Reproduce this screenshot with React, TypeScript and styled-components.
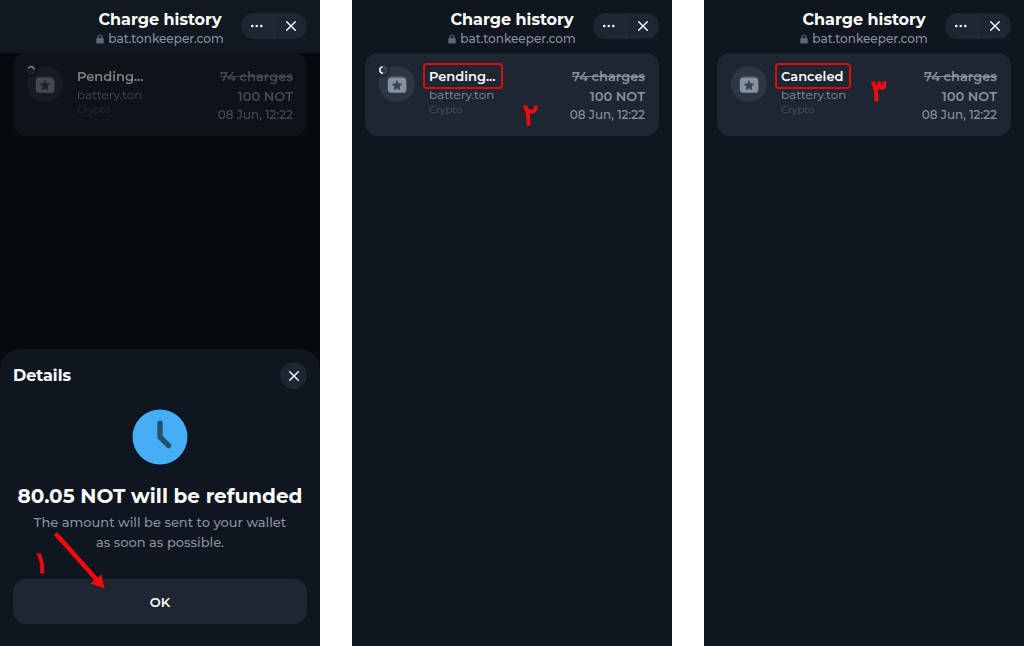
import React from "react";
import styled, { createGlobalStyle, css } from "styled-components";

const color = {
  page: "#10161f",
  header: "#111822",
  surface: "#1d2631",
  circle: "#2d3744",
  text: "#ffffff",
  soft: "#87919f",
  faint: "#4f5966",
  mark: "#f00a0c",
  accent: "#45aef5",
};

const GlobalStyle = createGlobalStyle`
  *, *::before, *::after { box-sizing: border-box; }
  body {
    margin: 0;
    background: #ffffff;
    color: ${color.text};
    font-family: Montserrat, Inter, "Noto Sans", sans-serif;
  }
  h1, h2, h3, p, ul { margin: 0; padding: 0; }
  button { font: inherit; color: inherit; border: 0; padding: 0; cursor: pointer; }
`;

const Gallery = styled.main`
  display: grid;
  grid-template-columns: repeat(3, minmax(0, 1fr));
  gap: 32px;
  min-height: 100vh;
`;

const Screen = styled.section`
  position: relative;
  display: flex;
  flex-direction: column;
  background: ${color.page};
`;

const Header = styled.header<{ $raised?: boolean }>`
  display: grid;
  grid-template-columns: 1fr auto 1fr;
  padding: 9px 13px 5px;
  min-height: 53px;
  background: ${(p) => (p.$raised ? color.header : color.page)};
`;

const Heading = styled.div`
  grid-column: 2;
  text-align: center;
`;

const Title = styled.h1`
  font-size: 16px;
  font-weight: 700;
  line-height: 22px;
  white-space: nowrap;
`;

const Site = styled.p`
  display: flex;
  align-items: center;
  justify-content: center;
  gap: 4px;
  color: ${color.soft};
  font-size: 12px;
  font-weight: 500;
  line-height: 16px;
`;

const Controls = styled.div`
  justify-self: end;
  display: flex;
  align-items: center;
  width: 66px;
  height: 26px;
  margin-top: 4px;
  border-radius: 13px;
  background: ${color.surface};
`;

const ControlButton = styled.button`
  display: grid;
  place-items: center;
  flex: 1;
  height: 100%;
  background: none;

  & + & {
    border-left: 1px solid #222c38;
  }
`;

const Body = styled.div<{ $dimmed?: boolean }>`
  flex: 1;
  display: flex;
  flex-direction: column;
  background: ${(p) => (p.$dimmed ? "#06090d" : color.page)};
`;

const Card = styled.article<{ $dimmed?: boolean }>`
  display: flex;
  gap: 14px;
  min-height: 83px;
  margin: 0 13px;
  padding: 13px 14px 11px;
  border-radius: 13px;
  background: ${color.surface};
  ${(p) => p.$dimmed && css`filter: brightness(0.5);`}
`;

const Avatar = styled.div`
  position: relative;
  display: grid;
  place-items: center;
  width: 36px;
  height: 36px;
  border-radius: 50%;
  background: ${color.circle};
`;

const Spinner = styled.span`
  position: absolute;
  top: -3px;
  left: -3px;
  display: grid;
  place-items: center;
  width: 14px;
  height: 14px;
  border: 2px solid ${color.surface};
  border-radius: 50%;
  background: ${color.circle};
`;

const Info = styled.div`
  flex: 1;
  min-width: 0;
`;

const Status = styled.h2<{ $marked?: boolean }>`
  position: relative;
  width: fit-content;
  font-size: 13px;
  font-weight: 600;
  line-height: 20px;

  ${(p) =>
    p.$marked &&
    css`
      &::after {
        content: "";
        position: absolute;
        inset: -3px -8px -3px -6px;
        border: 2px solid #d80d13;
        border-radius: 4px;
      }
    `}
`;

const Sender = styled.p`
  color: ${color.soft};
  font-size: 12px;
  line-height: 18px;
`;

const Kind = styled.p`
  color: ${color.faint};
  font-size: 10px;
  line-height: 12px;
`;

const Amounts = styled.div`
  color: ${color.soft};
  text-align: right;
  white-space: nowrap;
`;

const Charges = styled.p`
  font-size: 13px;
  font-weight: 600;
  line-height: 20px;
`;

const Moment = styled.p`
  font-size: 12px;
  font-weight: 500;
  line-height: 18px;
`;

const Sheet = styled.div`
  margin-top: auto;
  padding: 13px 13px 22px;
  border-radius: 20px 20px 0 0;
  background: ${color.page};
  text-align: center;
`;

const SheetTop = styled.div`
  display: flex;
  align-items: center;
  justify-content: space-between;
`;

const SheetTitle = styled.h2`
  font-size: 16px;
  font-weight: 700;
  line-height: 22px;
`;

const RoundButton = styled.button`
  display: grid;
  place-items: center;
  width: 27px;
  height: 27px;
  border-radius: 50%;
  background: ${color.surface};
`;

const Clock = styled.svg`
  display: block;
  margin: 20px auto 18px;
`;

const Message = styled.h3`
  font-size: 20px;
  font-weight: 700;
  line-height: 26px;
  white-space: nowrap;
`;

const Note = styled.p`
  margin: 3px 12px 27px;
  color: ${color.soft};
  font-size: 13px;
  font-weight: 500;
  line-height: 20px;
`;

const OkButton = styled.button`
  width: 100%;
  height: 45px;
  border-radius: 13px;
  background: ${color.surface};
  font-size: 13px;
  font-weight: 600;
`;

const StepNumber = styled.span<{ $x: number; $y: number }>`
  position: absolute;
  left: ${(p) => p.$x}px;
  top: ${(p) => p.$y}px;
  color: ${color.mark};
  font-family: "DejaVu Sans", sans-serif;
  font-size: 30px;
  line-height: 32px;
  -webkit-text-stroke: 1px ${color.mark};
`;

const Arrow = styled.svg`
  position: absolute;
  left: 52px;
  bottom: 56px;
  pointer-events: none;
`;

const Cross = () => (
  <svg width="12" height="12" viewBox="0 0 12 12" aria-hidden="true">
    <path d="M1.7 1.7l8.6 8.6M10.3 1.7l-8.6 8.6" stroke="#fff" strokeWidth="1.4" strokeLinecap="round" />
  </svg>
);

const Dots = () => (
  <svg width="14" height="4" viewBox="0 0 14 4" aria-hidden="true" fill="#fff">
    <circle cx="2.3" cy="2" r="1.3" />
    <circle cx="6.8" cy="2" r="1.3" />
    <circle cx="11.3" cy="2" r="1.3" />
  </svg>
);

const Lock = () => (
  <svg width="8" height="10" viewBox="0 0 8 10" aria-hidden="true">
    <path d="M2 5V3a2 2 0 0 1 4 0v2" fill="none" stroke="#5d6775" strokeWidth="1.2" />
    <rect x="0.3" y="4" width="7.4" height="5.6" rx="1.2" fill="#5d6775" />
  </svg>
);

const StarBox = () => (
  <svg width="20" height="20" viewBox="0 0 20 20" aria-hidden="true">
    <path d="M2.4 4.6a2.6 2.6 0 0 1 2.4-2.4h10.4a2.6 2.6 0 0 1 2.4 2.4z" fill="#4d5866" />
    <rect x="0.8" y="3.8" width="18.6" height="15" rx="3.2" fill="#8792a0" />
    <path
      d="M10 6.8l1.45 2.9 3.2.5-2.3 2.25.55 3.2-2.9-1.5-2.9 1.5.55-3.2-2.3-2.25 3.2-.5z"
      fill="#394452"
      stroke="#394452"
      strokeWidth="0.8"
      strokeLinejoin="round"
    />
  </svg>
);

const Arc = ({ path }: { path: string }) => (
  <svg width="10" height="10" viewBox="0 0 10 10" aria-hidden="true">
    <circle cx="5" cy="5" r="3.3" fill="none" stroke="#414c5a" strokeWidth="1.2" />
    <path d={path} fill="none" stroke="#fff" strokeWidth="1.4" strokeLinecap="round" />
  </svg>
);

const ScreenHeader = ({ raised }: { raised?: boolean }) => (
  <Header $raised={raised}>
    <Heading>
      <Title>Charge history</Title>
      <Site>
        <Lock />
        bat.tonkeeper.com
      </Site>
    </Heading>
    <Controls>
      <ControlButton type="button" aria-label="More">
        <Dots />
      </ControlButton>
      <ControlButton type="button" aria-label="Close">
        <Cross />
      </ControlButton>
    </Controls>
  </Header>
);

type ChargeProps = { status: string; marked?: boolean; dimmed?: boolean; arc?: string };

const ChargeCard = ({ status, marked, dimmed, arc }: ChargeProps) => (
  <Card $dimmed={dimmed}>
    <Avatar>
      <StarBox />
      {arc && (
        <Spinner>
          <Arc path={arc} />
        </Spinner>
      )}
    </Avatar>
    <Info>
      <Status $marked={marked}>{status}</Status>
      <Sender>battery.ton</Sender>
      <Kind>Crypto</Kind>
    </Info>
    <Amounts>
      <Charges>
        <s>74 charges</s>
      </Charges>
      <Charges>100 NOT</Charges>
      <Moment>08 Jun, 12:22</Moment>
    </Amounts>
  </Card>
);

export default function App() {
  return (
    <>
      <GlobalStyle />
      <Gallery>
        <Screen>
          <ScreenHeader raised />
          <Body $dimmed>
            <ChargeCard status="Pending..." dimmed arc="M2.6 2.7A3.3 3.3 0 0 1 8.2 4.2" />
            <Sheet>
              <SheetTop>
                <SheetTitle>Details</SheetTitle>
                <RoundButton type="button" aria-label="Close details">
                  <Cross />
                </RoundButton>
              </SheetTop>
              <Clock width="56" height="56" viewBox="0 0 56 56" aria-hidden="true">
                <circle cx="28" cy="28" r="27.5" fill={color.accent} />
                <path
                  d="M28 14.3V28l8.6 8.6"
                  fill="none"
                  stroke="#22506f"
                  strokeWidth="5.4"
                  strokeLinecap="round"
                  strokeLinejoin="round"
                />
              </Clock>
              <Message>80.05 NOT will be refunded</Message>
              <Note>
                The amount will be sent to your wallet
                <br />
                as soon as possible.
              </Note>
              <OkButton type="button">OK</OkButton>
            </Sheet>
          </Body>
          <StepNumber $x={33} $y={547}>۱</StepNumber>
          <Arrow width="54" height="60" viewBox="0 0 54 60" aria-hidden="true">
            <path d="M3.5 3.5L45 50" stroke={color.mark} strokeWidth="4.6" />
            <path d="M52.5 58.5L38.5 53.5L49.5 44.5z" fill={color.mark} />
          </Arrow>
        </Screen>
        <Screen>
          <ScreenHeader />
          <Body>
            <ChargeCard status="Pending..." marked arc="M4 1.9A3.3 3.3 0 0 0 4.4 8.2" />
          </Body>
          <StepNumber $x={170} $y={99}>۲</StepNumber>
        </Screen>
        <Screen>
          <ScreenHeader />
          <Body>
            <ChargeCard status="Canceled" marked />
          </Body>
          <StepNumber $x={166} $y={75}>۳</StepNumber>
        </Screen>
      </Gallery>
    </>
  );
}
